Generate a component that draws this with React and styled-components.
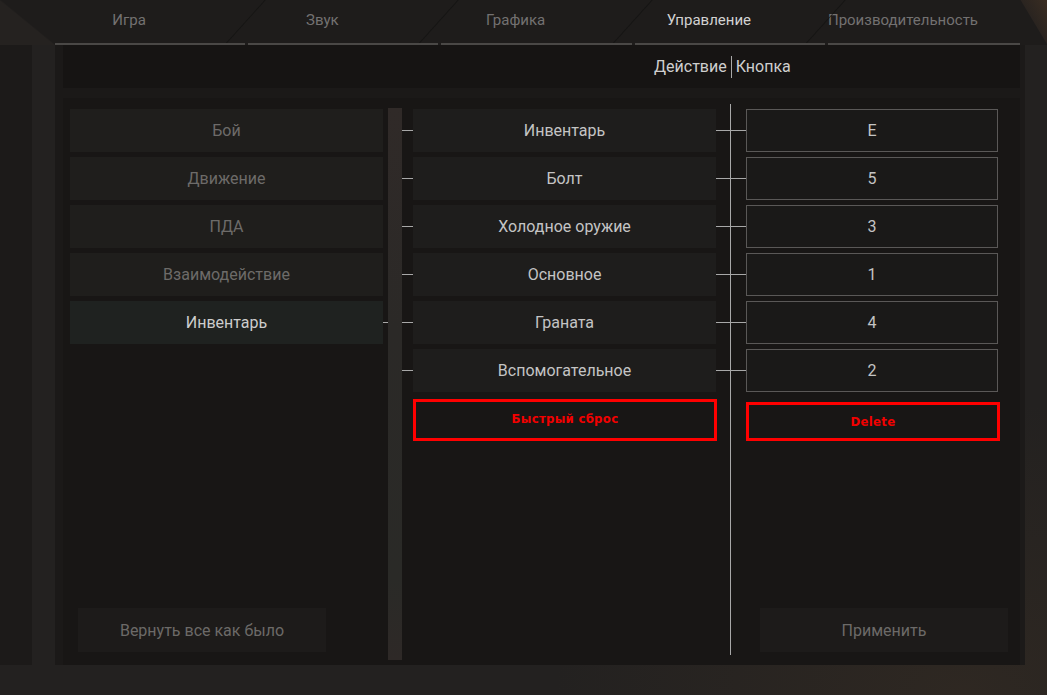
import styled, { createGlobalStyle } from 'styled-components';

const Global = createGlobalStyle`
    html, body {
        margin: 0;
        padding: 0;
        background: #1c1a19;
    }
    * { box-sizing: border-box; }
`

const tabs = ['Игра', 'Звук', 'Графика', 'Управление', 'Производительность'];
const categories = ['Бой', 'Движение', 'ПДА', 'Взаимодействие', 'Инвентарь'];
const bindings = [
    ['Инвентарь', 'E'],
    ['Болт', '5'],
    ['Холодное оружие', '3'],
    ['Основное', '1'],
    ['Граната', '4'],
    ['Вспомогательное', '2'],
];

const Screen = styled.div`
    width: 1047px;
    height: 695px;
    display: flex;
    font-family: Roboto, "Liberation Sans", sans-serif;
    background:
        radial-gradient(ellipse at 92% 100%, rgba(80, 60, 40, 0.25), transparent 30%),
        #232120;
    overflow: hidden;
`
const SideEdge = styled.div`
    width: ${props => props.right ? '27px' : '55px'};
    display: flex;
    flex-direction: column;
    padding-bottom: 30px;
`
const Bevel = styled.div`
    height: 45px;
    background: ${props => props.right
        ? 'linear-gradient(to bottom left, #3a2d22 0%, #2a2420 48%, #1e1c1b 50%)'
        : 'linear-gradient(to top right, #252220 49%, #1e1c1b 51%)'};
`
const EdgeBody = styled.div`
    flex: 1;
    display: flex;
`
const DarkStrip = styled.div`
    width: ${props => props.w};
    background: #1c1a19;
`
const Center = styled.div`
    width: 965px;
    display: flex;
    flex-direction: column;
`
const TabBar = styled.div`
    height: 45px;
    display: flex;
    gap: 3px;
    background: #1e1c1b;
`
const Tab = styled.div`
    position: relative;
    flex: 1;
    display: flex;
    align-items: center;
    justify-content: center;
    padding: 0 42px 3px 0;
    font-size: 15px;
    color: ${props => props.active ? '#d2d2d2' : '#737171'};
    border-bottom: 2px solid #4a4846;
    &::before {
        content: '';
        position: absolute;
        top: 0;
        bottom: 0;
        left: -22px;
        width: 1px;
        background: #121110;
        transform: skewX(-42deg);
        transform-origin: bottom;
        opacity: ${props => props.first ? 0 : 0.8};
    }
`
const Frame = styled.div`
    flex: 1;
    display: flex;
    flex-direction: column;
    background: #1b1918;
    padding-left: 8px;
    margin-bottom: 30px;
`
const Header = styled.div`
    height: 43px;
    background: #161413;
    display: flex;
    align-items: center;
    padding-left: 591px;
    font-size: 16px;
    color: #cfcfcf;
`
const HeaderSep = styled.span`
    width: 1px;
    height: 22px;
    background: #a8a8a8;
    margin: 0 4px 0 4px;
`
const Panel = styled.div`
    flex: 1;
    margin-top: 10px;
    background: #181615;
    display: flex;
    padding: 10px 0 5px 7px;
`
const LeftCol = styled.div`
    width: 313px;
    display: flex;
    flex-direction: column;
    gap: 5px;
    padding-top: 1px;
`
const CatRow = styled.div`
    position: relative;
    height: 43px;
    display: flex;
    align-items: center;
    justify-content: center;
    font-size: 16px;
    background: ${props => props.active ? '#1f2220' : '#1f1e1c'};
    color: ${props => props.active ? '#cdcdcd' : '#6d6b69'};
    &::after {
        content: '';
        display: ${props => props.active ? 'block' : 'none'};
        position: absolute;
        right: -5px;
        top: 21px;
        width: 5px;
        height: 1px;
        background: #a8a8a8;
    }
`
const BottomButton = styled.div`
    margin-top: auto;
    margin-left: ${props => props.offset || '8px'};
    margin-bottom: 8px;
    width: 248px;
    height: 44px;
    display: flex;
    align-items: center;
    justify-content: center;
    font-size: 16px;
    color: #6c6a68;
    background: #1d1b1a;
`
const Scroll = styled.div`
    width: 14px;
    margin-left: 5px;
    margin-right: 11px;
    background: linear-gradient(180deg, #302a28 0%, #2b2927 40%, #2a2a27 85%, #2e2927 100%);
`
const MidCol = styled.div`
    width: 303px;
    display: flex;
    flex-direction: column;
    gap: 5px;
    padding-top: 1px;
`
const ActionRow = styled.div`
    position: relative;
    height: 43px;
    display: flex;
    align-items: center;
    justify-content: center;
    font-size: 16px;
    color: #c4c4c4;
    background: #1e1d1c;
    &::before, &::after {
        content: '';
        position: absolute;
        top: 21px;
        height: 1px;
        background: #a8a8a8;
    }
    &::before {
        left: -11px;
        width: 11px;
    }
    &::after {
        right: -30px;
        width: 30px;
    }
`
const DangerButton = styled.div`
    width: ${props => props.tall ? '304px' : '254px'};
    height: ${props => props.tall ? '42px' : '39px'};
    margin-top: ${props => props.tall ? '2px' : '5px'};
    border: 3px solid #ff0000;
    display: flex;
    align-items: center;
    justify-content: center;
    font-family: "DejaVu Sans Condensed", "Liberation Sans Narrow", "DejaVu Sans", sans-serif;
    font-stretch: condensed;
    font-weight: bold;
    font-size: 13px;
    letter-spacing: 0.3px;
    color: #f20000;
    padding-bottom: ${props => props.tall ? '3px' : '0'};
`
const Link = styled.div`
    width: 30px;
    display: flex;
    justify-content: center;
    padding-bottom: 5px;
    margin-top: -4px;
    &::before {
        content: '';
        width: 1px;
        margin-left: -1px;
        background: #a8a8a8;
    }
`
const RightCol = styled.div`
    width: 262px;
    display: flex;
    flex-direction: column;
    gap: 5px;
    padding-top: 1px;
`
const KeyBox = styled.div`
    width: 252px;
    height: 43px;
    display: flex;
    align-items: center;
    justify-content: center;
    font-size: 16px;
    color: #c4c4c4;
    border: 1px solid #5a5857;
    background: #1a1918;
`

const App = () => {
    return (
        <>
            <Global />
            <Screen>
                <SideEdge>
                    <Bevel />
                    <EdgeBody>
                        <DarkStrip w="32px" />
                    </EdgeBody>
                </SideEdge>
                <Center>
                    <TabBar>
                        {tabs.map((t, i) => (
                            <Tab key={t} first={i === 0} active={t === 'Управление'}>{t}</Tab>
                        ))}
                    </TabBar>
                    <Frame>
                        <Header>
                            Действие<HeaderSep />Кнопка
                        </Header>
                        <Panel>
                            <LeftCol>
                                {categories.map(c => (
                                    <CatRow key={c} active={c === 'Инвентарь'}>{c}</CatRow>
                                ))}
                                <BottomButton>Вернуть все как было</BottomButton>
                            </LeftCol>
                            <Scroll />
                            <MidCol>
                                {bindings.map(([a]) => (
                                    <ActionRow key={a}>{a}</ActionRow>
                                ))}
                                <DangerButton tall>Быстрый сброс</DangerButton>
                            </MidCol>
                            <Link />
                            <RightCol>
                                {bindings.map(([a, k]) => (
                                    <KeyBox key={a}>{k}</KeyBox>
                                ))}
                                <DangerButton>Delete</DangerButton>
                                <BottomButton offset="14px">Применить</BottomButton>
                            </RightCol>
                        </Panel>
                    </Frame>
                </Center>
                <SideEdge right>
                    <Bevel right />
                    <EdgeBody>
                        <DarkStrip w="5px" />
                    </EdgeBody>
                </SideEdge>
            </Screen>
        </>
    )
}

export default App;
